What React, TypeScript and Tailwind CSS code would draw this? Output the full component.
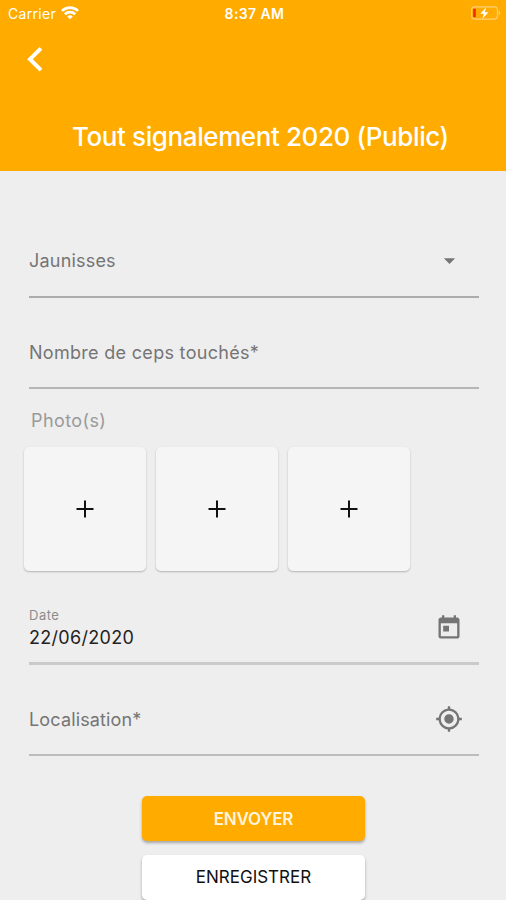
import React from "react";
import { MdArrowDropDown, MdMyLocation, MdToday } from "react-icons/md";

interface FieldProps {
    className: string;
    children: React.ReactNode;
    icon?: React.ReactNode;
}

const Field: React.FC<FieldProps> = ({ className, children, icon }) => {
    return (
        <div className={`flex items-center justify-between ml-[29px] mr-[27px] pr-4 ${className}`}>
            <div>{children}</div>
            {icon}
        </div>
    );
};

const WifiIcon = () => (
    <svg width="18" height="14" viewBox="0 0 18 14" fill="none" stroke="#fff" strokeWidth="2.7">
        <path d="M1 4.9C5.4.6 12.6.6 17 4.9" />
        <path d="M3.8 8.2c2.9-2.8 7.5-2.8 10.4 0" />
        <path d="M6.2 10.4c1.6-1.5 4-1.5 5.6 0L9 13.2z" fill="#fff" stroke="none" />
    </svg>
);

const BatteryIcon = () => (
    <svg width="30" height="14" viewBox="0 0 30 14" fill="none">
        <rect x="0.6" y="0.9" width="25.8" height="12.2" rx="3" stroke="#ffd078" strokeWidth="1.1" />
        <path d="M27.6 4.6c2 .8 2 4 0 4.8z" fill="#ffd078" />
        <rect x="2.2" y="2.8" width="2.6" height="8.4" rx="0.6" fill="#f5260e" />
        <path d="M15.3 1.2 9.2 7.8h3.7l-1.6 5.2 6.2-6.8h-3.8z" fill="#fff" />
    </svg>
);

const PlusIcon = () => (
    <svg width="18" height="18" viewBox="0 0 18 18" stroke="#111" strokeWidth="2">
        <path d="M0.5 9h17M9 0.5v17" />
    </svg>
);

const Header = () => (
    <header className="flex h-[171px] flex-col bg-[#ffab00] text-white">
        <div className="grid h-[26px] grid-cols-3 items-center pl-2 pr-[5px]">
            <div className="flex items-center gap-[5px]">
                <span className="text-[14px] tracking-[0.3px]">Carrier</span>
                <WifiIcon />
            </div>
            <span className="text-center text-[14px] font-semibold tracking-[0.4px]">8:37 AM</span>
            <div className="flex justify-end">
                <BatteryIcon />
            </div>
        </div>
        <button className="ml-[26px] mt-5 w-[18px]" aria-label="Retour">
            <svg width="18" height="26" viewBox="0 0 18 26" fill="none" stroke="#fff" strokeWidth="4">
                <path d="M15 2.3 4 13.2 15 24.1" />
            </svg>
        </button>
        <h1 className="ml-[72px] mt-[45px] whitespace-nowrap text-[26px] font-medium leading-[40px] tracking-[-0.4px]">
            Tout signalement 2020 (Public)
        </h1>
    </header>
);

export default function App() {
    return (
        <div className="h-[900px] w-[506px] overflow-hidden bg-[#eeeeee] font-['Inter',sans-serif] text-[18px] text-[#757575]">
            <Header />
            <form>
                <Field
                    className="mt-[54px] h-[73px] border-b-2 border-[#acacac]"
                    icon={<MdArrowDropDown size={27} />}
                >
                    <span className="tracking-[0.2px]">Jaunisses</span>
                </Field>
                <Field className="mt-[19px] h-[72px] border-b-2 border-[#b6b6b6]">
                    <span className="tracking-[0.3px]">Nombre de ceps touchés*</span>
                </Field>
                <p className="ml-[31px] mt-[18px] h-[40px] tracking-[0.4px] text-[#9a9a9a]">Photo(s)</p>
                <div className="ml-6 flex gap-[10px]">
                    {[1, 2, 3].map((i) => (
                        <button
                            key={i}
                            type="button"
                            className="flex h-[124px] w-[122px] items-center justify-center rounded-[5px] bg-[#f5f5f5] shadow-[0_1px_2px_rgba(0,0,0,0.25)]"
                        >
                            <PlusIcon />
                        </button>
                    ))}
                </div>
                <Field
                    className="mt-[28px] h-[66px] border-b-[3px] border-[#cacaca] pb-[5px]"
                    icon={<MdToday size={28} />}
                >
                    <p className="pt-[3px] text-[13px] leading-4 tracking-[0.5px] text-[#8c8c8c]">Date</p>
                    <p className="leading-[30px] tracking-[0.3px] text-[#222]">22/06/2020</p>
                </Field>
                <Field
                    className="mt-[18px] h-[73px] border-b-2 border-[#bcbcbc] pt-px"
                    icon={<MdMyLocation size={28} />}
                >
                    <span className="tracking-[0.15px]">Localisation*</span>
                </Field>
                <div className="ml-[142px] mt-10 flex w-[223px] flex-col gap-[14px] text-[17px]">
                    <button
                        type="button"
                        className="h-[45px] rounded-[5px] bg-[#ffab00] pt-0.5 font-semibold tracking-[-0.2px] text-[#fff4dc] shadow-[0_2px_3px_rgba(0,0,0,0.3)]"
                    >
                        ENVOYER
                    </button>
                    <button
                        type="button"
                        className="h-[45px] rounded-[5px] bg-white text-[#111] shadow-[0_2px_3px_rgba(0,0,0,0.3)]"
                    >
                        ENREGISTRER
                    </button>
                </div>
            </form>
        </div>
    );
}
